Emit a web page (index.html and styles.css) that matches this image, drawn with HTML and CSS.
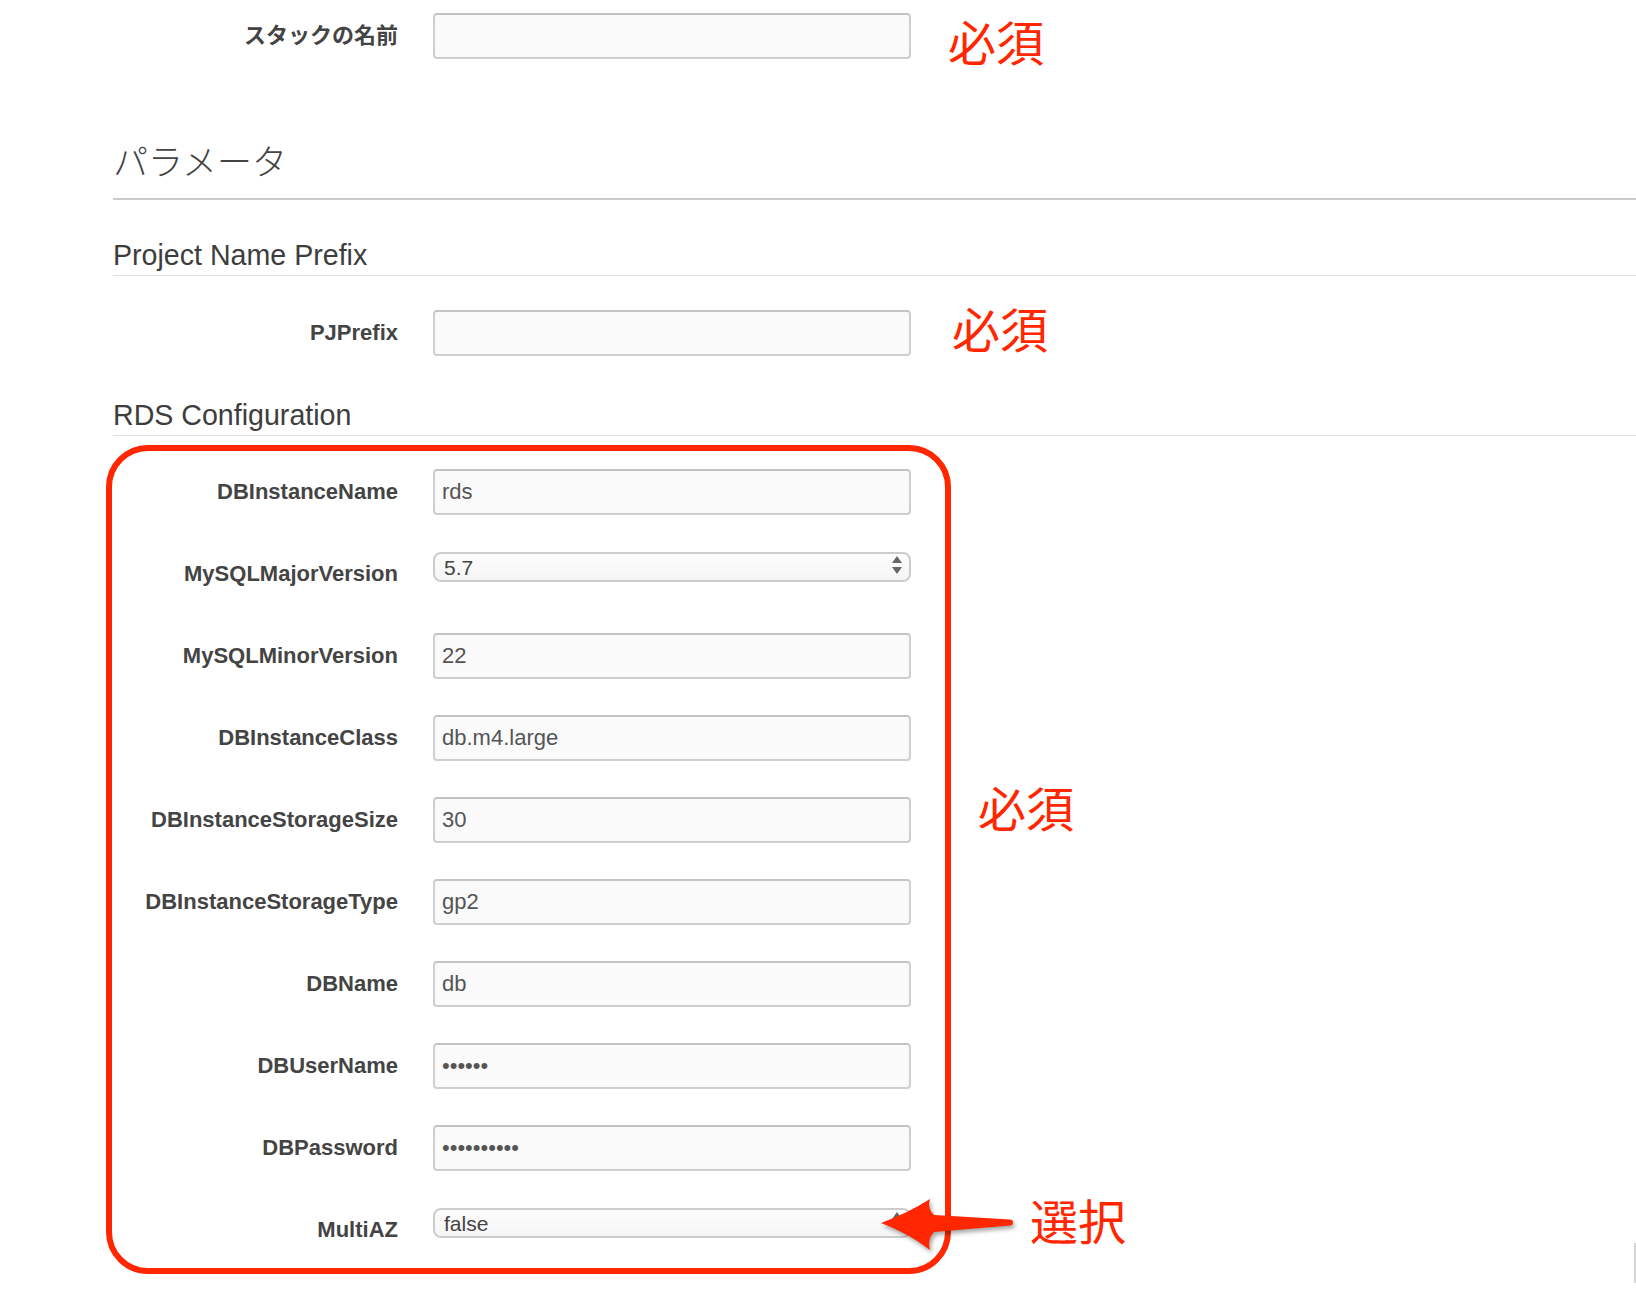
FILE: index.html
```html
<!DOCTYPE html>
<html lang="ja">
<head>
<meta charset="utf-8">
<title>スタックの詳細</title>
<link rel="stylesheet" href="styles.css">
</head>
<body>
<main class="page">
  <div class="row row-top">
    <label class="label label-jp">スタックの名前</label>
    <input class="field" type="text">
    <span class="note note-1">必須</span>
  </div>

  <h2 class="section-title">パラメータ</h2>

  <h3 class="group-title">Project Name Prefix</h3>
  <div class="row row-pj">
    <label class="label">PJPrefix</label>
    <input class="field" type="text">
    <span class="note note-2">必須</span>
  </div>

  <h3 class="group-title group-rds">RDS Configuration</h3>
  <div class="rds-area">
    <div class="red-box">
      <div class="frow"><label class="label">DBInstanceName</label><input class="field" type="text" value="rds"></div>
      <div class="frow"><label class="label">MySQLMajorVersion</label><div class="select-wrap"><select class="select"><option>5.7</option></select></div></div>
      <div class="frow"><label class="label">MySQLMinorVersion</label><input class="field" type="text" value="22"></div>
      <div class="frow"><label class="label">DBInstanceClass</label><input class="field" type="text" value="db.m4.large"></div>
      <div class="frow"><label class="label">DBInstanceStorageSize</label><input class="field" type="text" value="30"></div>
      <div class="frow"><label class="label">DBInstanceStorageType</label><input class="field" type="text" value="gp2"></div>
      <div class="frow"><label class="label">DBName</label><input class="field" type="text" value="db"></div>
      <div class="frow"><label class="label">DBUserName</label><input class="field" type="password" value="aaaaaa"></div>
      <div class="frow"><label class="label">DBPassword</label><input class="field" type="password" value="aaaaaaaaaa"></div>
      <div class="frow"><label class="label">MultiAZ</label><div class="select-wrap select-last"><select class="select"><option>false</option></select></div></div>
    </div>
    <div class="notes">
      <span class="note note-3">必須</span>
      <span class="note note-4">選択</span>
    </div>
    <svg class="arrow" width="150" height="65" viewBox="0 0 150 65" aria-hidden="true">
      <path d="M13,29 Q40,19 62,5 Q59,15 66,21 L142,25.5 A3,3 0 0 1 142,31.5 L66,38 Q59,45 62,56 Q40,39 13,29 Z" fill="#ff2600"/>
    </svg>
  </div>
  <div class="edge"></div>
</main>
</body>
</html>
```

FILE: styles.css
```css
html, body {
  margin: 0;
  padding: 0;
  background: #ffffff;
}

body {
  font-family: "Liberation Sans", "Noto Sans CJK JP", sans-serif;
  color: #444444;
}

.page {
  position: relative;
  padding-top: 13px;
  overflow: hidden;
  min-height: 1303px;
}

.row {
  display: grid;
  grid-template-columns: 398px 478px auto;
  column-gap: 35px;
  align-items: start;
}

.label {
  font-family: "Liberation Sans", "Noto Sans CJK JP", sans-serif;
  font-weight: bold;
  font-size: 22px;
  line-height: 46px;
  text-align: right;
  color: #444444;
  white-space: nowrap;
}

.field {
  box-sizing: border-box;
  width: 478px;
  height: 46px;
  margin: 0;
  padding: 0 7px;
  border: 2px solid #cfcfcf;
  border-top-color: #c4c4c4;
  border-radius: 4px;
  background: #fafafa;
  font-family: "Liberation Sans", sans-serif;
  font-size: 22px;
  color: #555555;
  outline: none;
}

.note {
  color: #ff2600;
  font-family: "Noto Sans CJK JP", sans-serif;
  font-weight: 400;
  font-size: 48px;
  line-height: 48px;
  white-space: nowrap;
}

.note-1 {
  margin-top: 3px;
  margin-left: 2px;
}

.note-2 {
  margin-top: -7px;
  margin-left: 6px;
}

.section-title {
  margin: 78px 0 0 113px;
  padding-bottom: 21px;
  border-bottom: 2px solid #cccccc;
  font-family: "Noto Sans CJK JP", sans-serif;
  font-weight: 300;
  font-size: 35px;
  line-height: 35px;
  color: #444444;
}

.group-title {
  margin: 39px 0 0 113px;
  padding-bottom: 4px;
  border-bottom: 1px solid #dddddd;
  font-family: "Liberation Sans", sans-serif;
  font-weight: normal;
  font-size: 28.6px;
  line-height: 32px;
  color: #3d3d3d;
}

.row-pj {
  margin-top: 34px;
}

.group-rds {
  margin-top: 43px;
}

.rds-area {
  position: relative;
  display: flex;
  align-items: stretch;
  margin: 9px 0 0 106px;
}

.red-box {
  display: flex;
  flex-direction: column;
  gap: 36px;
  padding: 18px 34px 15px 0;
  border: 6px solid #ff2600;
  border-radius: 42px;
}

.frow {
  display: grid;
  grid-template-columns: 286px 478px;
  column-gap: 35px;
  align-items: start;
}

.select-wrap {
  position: relative;
  margin-top: 1px;
  height: 30px;
}

.select {
  -webkit-appearance: none;
  appearance: none;
  box-sizing: border-box;
  width: 478px;
  height: 30px;
  margin: 0;
  padding: 0 9px;
  border: 2px solid #cccccc;
  border-radius: 8px;
  background: linear-gradient(#fdfdfd, #f5f5f5);
  font-family: "Liberation Sans", sans-serif;
  font-size: 21px;
  color: #444444;
  outline: none;
}

.select-wrap::before,
.select-wrap::after {
  content: "";
  position: absolute;
  right: 9px;
  width: 0;
  height: 0;
  border-left: 5px solid transparent;
  border-right: 5px solid transparent;
}

.select-wrap::before {
  top: 4px;
  border-bottom: 7px solid #666666;
}

.select-wrap::after {
  top: 15px;
  border-top: 7px solid #666666;
}

.notes {
  display: flex;
  flex-direction: column;
  align-items: flex-start;
  margin-left: 27px;
  padding-top: 337px;
}

.note-4 {
  margin-top: 365px;
  margin-left: 52px;
}

.arrow {
  position: absolute;
  left: 762px;
  top: 749px;
  overflow: visible;
  filter: drop-shadow(2px 3px 2px rgba(0, 0, 0, 0.35));
}

.edge {
  position: absolute;
  left: 1634px;
  top: 1243px;
  width: 2px;
  height: 40px;
  background: #d4d4d4;
}
```
